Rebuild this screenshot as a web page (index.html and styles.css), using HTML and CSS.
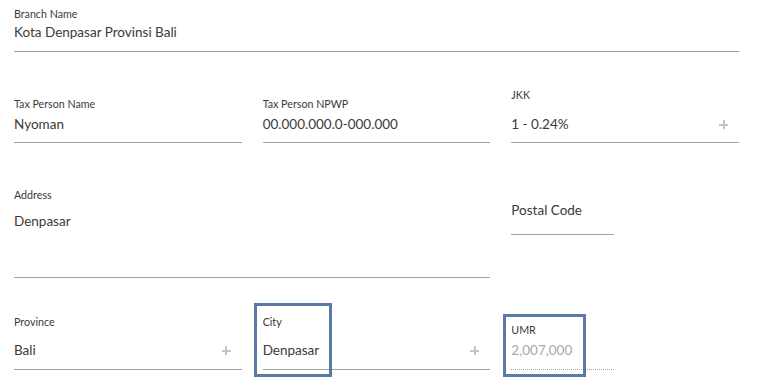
FILE: index.html
```html
<!DOCTYPE html>
<html>
<head>
<meta charset="utf-8">
<link rel="stylesheet" href="styles.css">
</head>
<body>
<div class="form">
  <div class="row row-1">
    <div class="field span-3">
      <div class="label">Branch Name</div>
      <div class="value">Kota Denpasar Provinsi Bali</div>
    </div>
  </div>

  <div class="row row-2">
    <div class="field">
      <div class="label">Tax Person Name</div>
      <div class="value">Nyoman</div>
    </div>
    <div class="field">
      <div class="label">Tax Person NPWP</div>
      <div class="value">00.000.000.0-000.000</div>
    </div>
    <div class="field select jkk">
      <div class="label">JKK</div>
      <div class="value">1 - 0.24%<span class="plus"></span></div>
    </div>
  </div>

  <div class="row row-3">
    <div class="field span-2 address">
      <div class="label">Address</div>
      <div class="value">Denpasar</div>
    </div>
    <div class="field postal">
      <div class="value placeholder">Postal Code</div>
    </div>
  </div>

  <div class="row row-4">
    <div class="field select">
      <div class="label">Province</div>
      <div class="value">Bali<span class="plus"></span></div>
    </div>
    <div class="field select city">
      <div class="label">City</div>
      <div class="value">Denpasar<span class="plus"></span></div>
      <div class="highlight hl-city"></div>
    </div>
    <div class="field umr">
      <div class="label">UMR</div>
      <div class="value muted">2,007,000</div>
      <div class="highlight hl-umr"></div>
    </div>
  </div>
</div>
</body>
</html>
```

FILE: styles.css
```css
html, body {
  margin: 0;
  padding: 0;
  background: #ffffff;
}

body {
  font-family: Lato, "Open Sans", "Liberation Sans", sans-serif;
  color: #3a3a3a;
  width: 758px;
  height: 383px;
  overflow: hidden;
}

.form {
  padding: 0 19px 0 14px;
}

.row {
  display: grid;
  grid-template-columns: repeat(3, 1fr);
  column-gap: 21px;
}

.field {
  position: relative;
  display: flex;
  flex-direction: column;
  border-bottom: 1px solid #a3a3a3;
}

.span-3 { grid-column: span 3; }
.span-2 { grid-column: span 2; }

.label {
  font-size: 10.7px;
  line-height: 14px;
  color: #3a3a3a;
}

.value {
  position: relative;
  font-size: 13.5px;
  line-height: 20px;
  color: #3a3a3a;
}

.plus {
  position: absolute;
  right: 11px;
  top: 6px;
  width: 9px;
  height: 9px;
}
.plus::before,
.plus::after {
  content: "";
  position: absolute;
  background: #c4c4c4;
}
.plus::before {
  left: 0;
  top: 3.5px;
  width: 9px;
  height: 2px;
}
.plus::after {
  left: 3.5px;
  top: 0;
  width: 2px;
  height: 9px;
}

/* row 1 */
.row-1 .label { margin-top: 7px; }
.row-1 .value { margin-top: 1px; padding-bottom: 9px; }

/* row 2 */
.row-2 { align-items: end; }
.row-2 .label { margin-top: 45px; }
.row-2 .value { margin-top: 3px; padding-bottom: 8px; }
.row-2 .jkk .label { margin-top: 36px; }
.row-2 .jkk .value { margin-top: 12px; }

/* row 3 */
.row-3 { align-items: start; }
.address .label { margin-top: 45px; }
.address .value { margin-top: 9px; padding-bottom: 46px; }
.postal { margin-top: 57px; width: 103px; }
.postal .value { padding-bottom: 14px; }

/* row 4 */
.row-4 { align-items: end; }
.row-4 .label { margin-top: 37px; }
.row-4 .value { margin-top: 11px; padding-bottom: 9px; }
.row-4 .umr .label { margin-top: 45px; }
.row-4 .umr .value { margin-top: 3px; }
.umr {
  width: 103px;
  border-bottom: 1px dotted #a3a3a3;
}
.muted { color: #a8a8a8; }

/* annotation boxes */
.highlight {
  position: absolute;
  border: 3px solid #5a79a7;
  box-sizing: border-box;
}
.hl-city {
  left: -9px;
  top: 25px;
  width: 78px;
  height: 74px;
}
.hl-umr {
  left: -8px;
  top: 36px;
  width: 83px;
  height: 63px;
}
```
